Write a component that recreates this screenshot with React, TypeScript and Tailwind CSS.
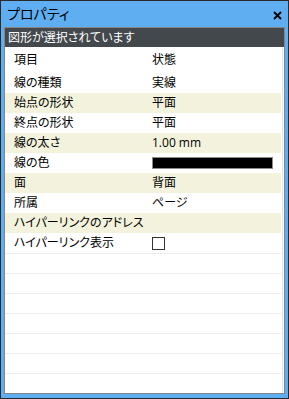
import React from 'react';

// プロパティ パネルの行データ
const rows: { label: string; value: React.ReactNode; shaded?: boolean }[] = [
  { label: '線の種類', value: '実線' },
  { label: '始点の形状', value: '平面', shaded: true },
  { label: '終点の形状', value: '平面' },
  { label: '線の太さ', value: '1.00 mm', shaded: true },
  { label: '線の色', value: 'swatch' },
  { label: '面', value: '背面', shaded: true },
  { label: '所属', value: 'ページ' },
  { label: 'ハイパーリンクのアドレス', value: '', shaded: true },
  { label: 'ハイパーリンク表示', value: 'check' },
];

const emptyRows = 7;

function Value({ value }: { value: React.ReactNode }) {
  if (value === 'swatch') {
    return <div className="w-[121px] h-[12px] bg-black border border-[#8c8c8c]" />;
  }
  if (value === 'check') {
    return <div className="w-[13px] h-[13px] bg-white border border-[#333333]" />;
  }
  return <span>{value}</span>;
}

export default function App() {
  return (
    <div
      className="w-[289px] h-[399px] bg-[#5eaef1] border border-[#2a2a2a] flex flex-col text-black [font-feature-settings:'palt']"
      style={{ fontFamily: '"Open Sans", "Noto Sans CJK JP", sans-serif' }}
    >
      {/* タイトルバー */}
      <div className="h-[26px] flex items-center justify-between pl-[6px] pr-[6px] shrink-0">
        <span className="text-[14px] leading-none">プロパティ</span>
        <svg width="9" height="9" viewBox="0 0 9 9" className="mt-[2px]">
          <path d="M1 1 L8 8 M8 1 L1 8" stroke="#000" strokeWidth="1.8" />
        </svg>
      </div>

      {/* 本体 */}
      <div className="flex-1 mx-[3px] mb-[4px] border border-[#858585] bg-white flex flex-col min-h-0">
        <div className="h-[19px] bg-[#43484c] text-white text-[12px] leading-none flex items-center pl-[3px] shrink-0">
          図形が選択されています
        </div>

        <div className="flex-1 flex flex-col pr-[1px] border-r border-[#e6e6e6] mr-[1px] overflow-hidden">
          <div className="h-[26px] flex items-center text-[12px] shrink-0">
            <div className="w-[138px] pl-[9px]">項目</div>
            <div className="pl-[9px]">状態</div>
          </div>

          {rows.map((r) => (
            <div
              key={r.label}
              className={`h-[20px] flex items-center text-[12px] leading-none shrink-0 ${r.shaded ? 'bg-[#f3f3dd]' : 'bg-white'}`}
            >
              <div className="w-[138px] pl-[9px] whitespace-nowrap">{r.label}</div>
              <div className="pl-[9px] flex items-center">
                <Value value={r.value} />
              </div>
            </div>
          ))}

          {Array.from({ length: emptyRows }).map((_, i) => (
            <div key={i} className="h-[20px] border-t border-[#ebebeb] shrink-0" />
          ))}
        </div>
      </div>
    </div>
  );
}
